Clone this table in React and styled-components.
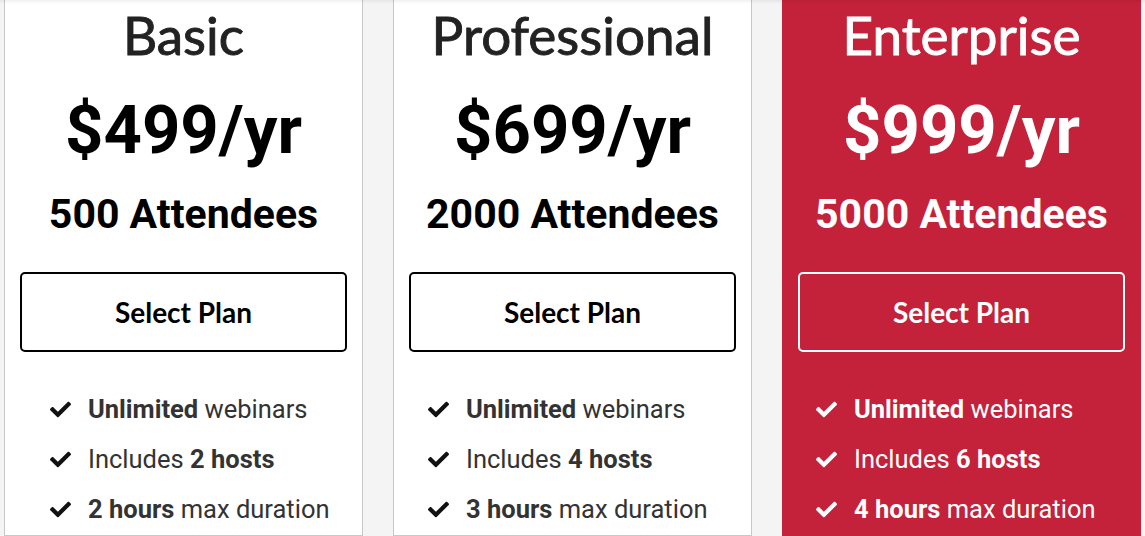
import styled, { createGlobalStyle } from 'styled-components';
import { FaCheck } from 'react-icons/fa';

const GlobalStyle = createGlobalStyle`
    html, body {
        margin: 0;
        padding: 0;
        background: #f4f4f4;
    }
`;

const Page = styled.div`
    position: relative;
    width: 1145px;
    height: 536px;
    overflow: hidden;
    background: #f4f4f4;
    display: grid;
    grid-template-columns: repeat(3, 359px);
    column-gap: 30px;
    padding-left: 4px;
    box-sizing: border-box;

    /* faint shadow of the header above */
    &::after {
        content: '';
        position: absolute;
        inset: 0 0 auto 0;
        height: 4px;
        background: linear-gradient(rgba(0, 0, 0, 0.06), rgba(0, 0, 0, 0));
        pointer-events: none;
    }
`;

const Card = styled.div`
    display: flex;
    flex-direction: column;
    align-items: stretch;
    box-sizing: border-box;
    padding: 0 15px;
    background: ${p => (p.$featured ? '#c3223a' : '#fff')};
    border: 1px solid ${p => (p.$featured ? '#c3223a' : '#c8c8c8')};
    border-top: none;
    color: ${p => (p.$featured ? '#fff' : '#000')};
`;

/* no medium Lato available, so thicken regular a touch */
const Title = styled.h2`
    margin: 0;
    font-family: Lato, 'Liberation Sans', sans-serif;
    font-weight: 400;
    font-size: 53px;
    line-height: 70px;
    text-align: center;
    -webkit-text-stroke: 0.9px currentColor;
    color: ${p => (p.$featured ? '#fff' : '#222')};
`;

const Price = styled.div`
    margin-top: 20px;
    font-family: Roboto, 'Liberation Sans', sans-serif;
    font-weight: 700;
    font-size: 67px;
    line-height: 80px;
    text-align: center;
`;

const Attendees = styled.div`
    margin-top: 19px;
    font-family: Roboto, 'Liberation Sans', sans-serif;
    font-weight: 700;
    font-size: 41px;
    line-height: 50px;
    text-align: center;
`;

const SelectButton = styled.button`
    margin-top: 33px;
    height: 80px;
    border: 2px solid ${p => (p.$featured ? '#fff' : '#000')};
    border-radius: 5px;
    background: transparent;
    color: inherit;
    font-family: Lato, 'Liberation Sans', sans-serif;
    font-weight: 700;
    font-size: 28px;
    cursor: pointer;
`;

const Features = styled.ul`
    list-style: none;
    margin: 32px 0 0;
    padding: 0 0 0 ${p => p.$indent}px;
`;

const Feature = styled.li`
    display: flex;
    align-items: center;
    gap: 17px;
    height: 50px;
    font-family: Roboto, 'Liberation Sans', sans-serif;
    font-size: 25.5px;
    color: ${p => (p.$featured ? '#fff' : '#333')};

    b {
        font-weight: 700;
    }

    svg {
        flex: none;
        width: 21px;
        height: 21px;
        color: ${p => (p.$featured ? '#fff' : '#111')};
    }
`;

const plans = [
    { name: 'Basic', price: '$499/yr', attendees: '500 Attendees', hosts: 2, hours: 2, indent: 30 },
    { name: 'Professional', price: '$699/yr', attendees: '2000 Attendees', hosts: 4, hours: 3, indent: 19 },
    { name: 'Enterprise', price: '$999/yr', attendees: '5000 Attendees', hosts: 6, hours: 4, indent: 18, featured: true },
];

const App = () => {
    return (
        <>
            <GlobalStyle />
            <Page>
                {plans.map(plan => (
                    <Card key={plan.name} $featured={plan.featured}>
                        <Title $featured={plan.featured}>{plan.name}</Title>
                        <Price>{plan.price}</Price>
                        <Attendees>{plan.attendees}</Attendees>
                        <SelectButton $featured={plan.featured}>Select Plan</SelectButton>
                        <Features $indent={plan.indent}>
                            <Feature $featured={plan.featured}>
                                <FaCheck />
                                <span><b>Unlimited</b> webinars</span>
                            </Feature>
                            <Feature $featured={plan.featured}>
                                <FaCheck />
                                <span>Includes <b>{plan.hosts} hosts</b></span>
                            </Feature>
                            <Feature $featured={plan.featured}>
                                <FaCheck />
                                <span><b>{plan.hours} hours</b> max duration</span>
                            </Feature>
                        </Features>
                    </Card>
                ))}
            </Page>
        </>
    );
};

export default App;
